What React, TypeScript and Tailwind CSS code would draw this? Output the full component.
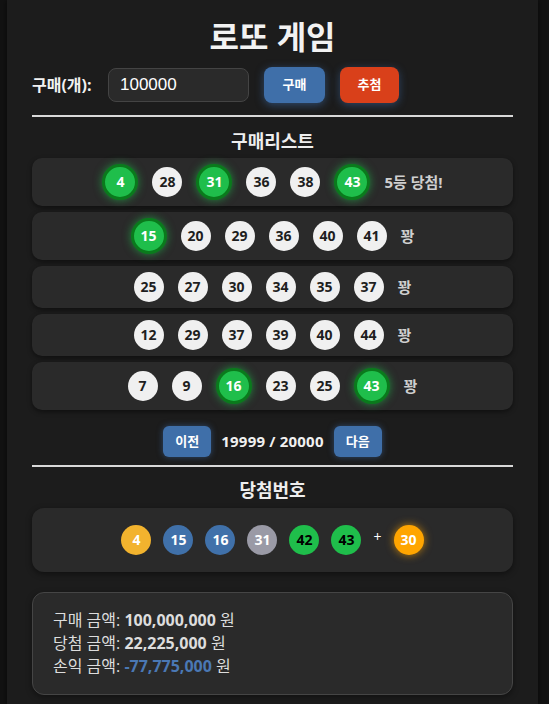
import React from "react";

const FONT = { fontFamily: '"Open Sans", "Noto Sans CJK KR", sans-serif' };

type Row = { nums: number[]; hits: number[]; result: string };

const rows: Row[] = [
  { nums: [4, 28, 31, 36, 38, 43], hits: [4, 31, 43], result: "5등 당첨!" },
  { nums: [15, 20, 29, 36, 40, 41], hits: [15], result: "꽝" },
  { nums: [25, 27, 30, 34, 35, 37], hits: [], result: "꽝" },
  { nums: [12, 29, 37, 39, 40, 44], hits: [], result: "꽝" },
  { nums: [7, 9, 16, 23, 25, 43], hits: [16, 43], result: "꽝" },
];

function Ball({ n, hit }: { n: number; hit: boolean }) {
  if (hit) {
    return (
      <div className="w-[36px] h-[36px] rounded-full bg-[#1fbe4b] border-[3px] border-[#0a7a1c] shadow-[0_0_8px_rgba(34,200,80,0.6)] flex items-center justify-center text-white text-[14px] font-bold leading-none">
        {n}
      </div>
    );
  }
  return (
    <div className="w-[30px] h-[30px] rounded-full bg-[#f0f0f0] flex items-center justify-center text-[#1e1e1e] text-[14px] font-bold leading-none">
      {n}
    </div>
  );
}

function WinBall({ n, cls }: { n: number; cls: string }) {
  return (
    <div className={"w-[30px] h-[30px] rounded-full flex items-center justify-center text-[14px] font-bold leading-none " + cls}>
      {n}
    </div>
  );
}

export default function App() {
  return (
    <div className="min-h-[704px] bg-[#121212] flex" style={FONT}>
      <div className="ml-[7px] w-[531px] bg-[#1c1c1c] px-[25px] pt-[16px] pb-[10px] shadow-[0_0_6px_rgba(0,0,0,0.6)]">
        <h1 className="h-[42px] leading-[42px] text-center text-[32px] font-bold text-[#f2f2f2]">로또 게임</h1>
        <div className="mt-[9px] flex items-center h-[36px]">
          <span className="w-[66px] whitespace-nowrap text-[16px] font-bold text-[#f2f2f2]">구매(개):</span>
          <div
            className="ml-[10px] w-[141px] h-[34px] rounded-[8px] bg-[#2a2a2a] border border-[#444] flex items-center pl-[11px] text-[17px] text-white"
            style={{ fontFamily: '"Liberation Sans", Arial, sans-serif' }}
          >
            100000
          </div>
          <button className="ml-[15px] w-[61px] h-[36px] rounded-[8px] bg-[#3f6fa9] text-white text-[13px] font-bold shadow-[0_2px_8px_rgba(66,120,190,0.5)]">
            구매
          </button>
          <button className="ml-[15px] w-[59px] h-[36px] rounded-[8px] bg-[#d9401a] text-white text-[13px] font-bold shadow-[0_2px_8px_rgba(66,120,190,0.45)]">
            추첨
          </button>
        </div>
        <div className="mt-[12px] h-[2px] bg-[#d8d8d8]" />
        <h2 className="mt-[12px] h-[24px] leading-[24px] text-center text-[18px] font-bold text-[#eeeeee]">구매리스트</h2>
        <div className="mt-[5px] flex flex-col gap-[6px]">
          {rows.map((r, i) => {
            const hasHit = r.hits.length > 0;
            return (
              <div
                key={i}
                className={
                  "rounded-[10px] bg-[#2a2a2a] shadow-[0_2px_5px_rgba(0,0,0,0.45)] flex items-center justify-center gap-[14px] " +
                  (hasHit ? "h-[48px]" : "h-[42px]")
                }
              >
                {r.nums.map((n) => (
                  <Ball key={n} n={n} hit={r.hits.includes(n)} />
                ))}
                <span className="text-[15px] font-bold text-[#cfcfcf]">{r.result}</span>
              </div>
            );
          })}
        </div>
        <div className="mt-[16px] flex items-center justify-center gap-[10px]">
          <button className="w-[48px] h-[31px] rounded-[6px] bg-[#3f6fa9] text-white text-[13px] font-bold shadow-[0_0_6px_rgba(66,120,190,0.5)]">
            이전
          </button>
          <span className="text-[15px] font-bold text-[#f0f0f0] tracking-[0.2px]">19999 / 20000</span>
          <button className="w-[48px] h-[31px] rounded-[6px] bg-[#3f6fa9] text-white text-[13px] font-bold shadow-[0_0_6px_rgba(66,120,190,0.5)]">
            다음
          </button>
        </div>
        <div className="mt-[8px] h-[2px] bg-[#d8d8d8]" />
        <h2 className="mt-[11px] h-[24px] leading-[24px] text-center text-[18px] font-bold text-[#eeeeee]">당첨번호</h2>
        <div className="mt-[6px] h-[64px] rounded-[12px] bg-[#2a2a2a] shadow-[0_2px_6px_rgba(0,0,0,0.45)] flex items-center justify-center gap-[12px]">
          <WinBall n={4} cls="bg-[#f2b32e] text-white" />
          <WinBall n={15} cls="bg-[#4071aa] text-white" />
          <WinBall n={16} cls="bg-[#4071aa] text-white" />
          <WinBall n={31} cls="bg-[#9a9aa6] text-white" />
          <WinBall n={42} cls="bg-[#1fbe4b] text-black" />
          <WinBall n={43} cls="bg-[#1fbe4b] text-black" />
          <span className="text-[14px] text-white -mt-[8px]">+</span>
          <WinBall n={30} cls="bg-[#ffa500] text-white shadow-[0_0_8px_rgba(255,165,0,0.7)]" />
        </div>
        <div className="mt-[20px] rounded-[12px] bg-[#2a2a2a] border border-[#454545] px-[20px] py-[16px] text-[16px] leading-[23px] text-[#dddddd] shadow-[0_2px_6px_rgba(0,0,0,0.4)]">
          <div>
            구매 금액: <b className="font-bold">100,000,000</b> 원
          </div>
          <div>
            당첨 금액: <b className="font-bold">22,225,000</b> 원
          </div>
          <div>
            손익 금액: <b className="font-bold text-[#4a78b4]">-77,775,000</b> 원
          </div>
        </div>
      </div>
    </div>
  );
}
